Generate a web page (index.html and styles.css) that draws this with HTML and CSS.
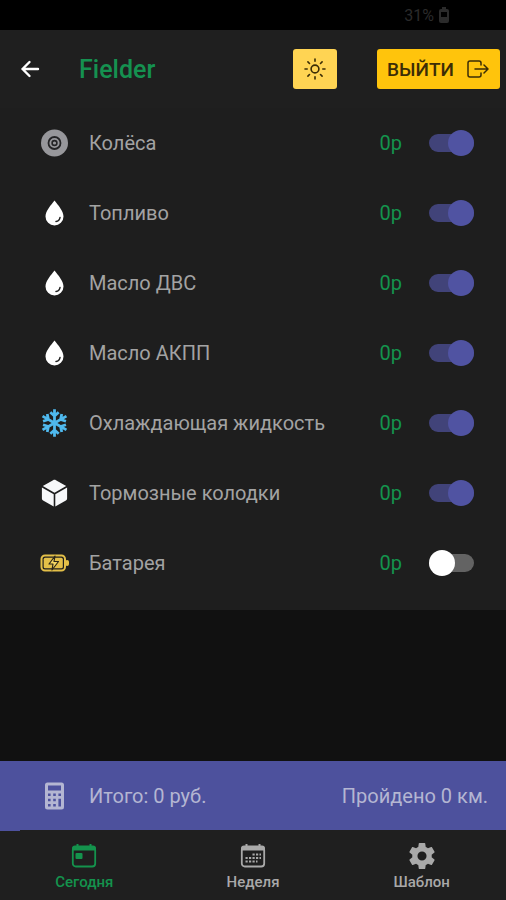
FILE: index.html
```html
<!DOCTYPE html>
<html lang="ru">
<head>
  <meta charset="UTF-8">
  <meta name="viewport" content="width=device-width, initial-scale=1">
  <title>Fielder</title>
  <link rel="stylesheet" href="styles.css">
</head>
<body>
  <div class="status-bar">
    <span>31%</span>
    <svg width="12" height="16" viewBox="0 0 12 16">
      <path d="M3 2h1V0h4v2h1a2 2 0 0 1 2 2v10a2 2 0 0 1-2 2H3a2 2 0 0 1-2-2V4a2 2 0 0 1 2-2zm0 3v5h6V5z" fill="currentColor" fill-rule="evenodd"/>
    </svg>
  </div>

  <header class="header">
    <button type="button" class="back-btn" aria-label="Назад">
      <svg width="20" height="20" viewBox="0 0 20 20" fill="none" stroke="currentColor" stroke-width="2.400" stroke-linecap="round" stroke-linejoin="round">
        <path d="M9.500 3L2.500 10l7 7M2.500 10H18"/>
      </svg>
    </button>
    <h1 class="title">Fielder</h1>
    <button type="button" class="btn theme-btn" aria-label="Тема">
      <svg width="22" height="22" viewBox="0 0 22 22" fill="none" stroke="currentColor" stroke-width="1.600" stroke-linecap="round">
        <circle cx="11" cy="11" r="3.900"/>
        <path d="M11 1v2.200M11 18.800V21M1 11h2.200M18.800 11H21M3.900 3.900l1.600 1.600M16.500 16.500l1.600 1.600M3.900 18.100l1.600-1.600M16.500 5.500l1.600-1.600"/>
      </svg>
    </button>
    <button type="button" class="btn exit-btn">
      <span>ВЫЙТИ</span>
      <svg width="22" height="18" viewBox="0 0 22 18" fill="none" stroke="currentColor" stroke-width="1.500" stroke-linecap="round" stroke-linejoin="round">
        <path d="M14 5V3a2 2 0 0 0-2-2H3a2 2 0 0 0-2 2v12a2 2 0 0 0 2 2h9a2 2 0 0 0 2-2v-2M17 5l4 4-4 4M8 9h12.500"/>
      </svg>
    </button>
  </header>

  <main class="content">
    <ul class="list">
      <li class="item">
        <svg class="item-icon" viewBox="0 0 28 28">
          <circle cx="14" cy="14" r="13.500" fill="#97979b"/>
          <circle cx="14" cy="14" r="6" fill="none" stroke="#242426" stroke-width="1.800"/>
          <circle cx="14" cy="14" r="2.400" fill="none" stroke="#242426" stroke-width="1.600"/>
        </svg>
        <label class="item-name" for="wheels">Колёса</label>
        <span class="price">0р</span>
        <input type="checkbox" class="toggle" id="wheels" checked>
      </li>
      <li class="item">
        <svg class="item-icon" viewBox="0 0 28 28">
          <path d="M14 1.500c3.500 4.500 9 10.500 9 16a9 9 0 0 1-18 0c0-5.500 5.500-11.500 9-16z" fill="#fff"/>
          <path d="M19.500 18.500c-.3 2.200-1.800 3.700-4 4" fill="none" stroke="#222" stroke-width="1.500" stroke-linecap="round"/>
        </svg>
        <label class="item-name" for="fuel">Топливо</label>
        <span class="price">0р</span>
        <input type="checkbox" class="toggle" id="fuel" checked>
      </li>
      <li class="item">
        <svg class="item-icon" viewBox="0 0 28 28">
          <path d="M14 1.500c3.500 4.500 9 10.500 9 16a9 9 0 0 1-18 0c0-5.500 5.500-11.500 9-16z" fill="#fff"/>
          <path d="M19.500 18.500c-.3 2.200-1.800 3.700-4 4" fill="none" stroke="#222" stroke-width="1.500" stroke-linecap="round"/>
        </svg>
        <label class="item-name" for="engineOil">Масло ДВС</label>
        <span class="price">0р</span>
        <input type="checkbox" class="toggle" id="engineOil" checked>
      </li>
      <li class="item">
        <svg class="item-icon" viewBox="0 0 28 28">
          <path d="M14 1.500c3.500 4.500 9 10.500 9 16a9 9 0 0 1-18 0c0-5.500 5.500-11.500 9-16z" fill="#fff"/>
          <path d="M19.500 18.500c-.3 2.200-1.800 3.700-4 4" fill="none" stroke="#222" stroke-width="1.500" stroke-linecap="round"/>
        </svg>
        <label class="item-name" for="gearOil">Масло АКПП</label>
        <span class="price">0р</span>
        <input type="checkbox" class="toggle" id="gearOil" checked>
      </li>
      <li class="item">
        <svg class="item-icon" viewBox="0 0 28 28" fill="none" stroke="#4fb9ee" stroke-width="2.800" stroke-linejoin="round">
          <path id="ray" d="M14 14V.2M9.800 3.200L14 7l4.200-3.800"/>
          <use href="#ray" transform="rotate(60 14 14)"/>
          <use href="#ray" transform="rotate(120 14 14)"/>
          <use href="#ray" transform="rotate(180 14 14)"/>
          <use href="#ray" transform="rotate(240 14 14)"/>
          <use href="#ray" transform="rotate(300 14 14)"/>
        </svg>
        <label class="item-name" for="coolant">Охлаждающая жидкость</label>
        <span class="price">0р</span>
        <input type="checkbox" class="toggle" id="coolant" checked>
      </li>
      <li class="item">
        <svg class="item-icon" viewBox="0 0 28 28" fill="#f7f8fa">
          <path d="M14 .8c.5 0 1 .1 1.400.4l10.300 5.900L14 13.700 2.300 7.100l10.300-5.900c.4-.3.900-.4 1.400-.4z"/>
          <path d="M1.400 8.600l11.800 6.700v12.300l-10.600-6c-.8-.4-1.200-1.100-1.200-2z"/>
          <path d="M26.600 8.600l-11.800 6.700v12.300l10.600-6c.8-.4 1.200-1.100 1.200-2z"/>
        </svg>
        <label class="item-name" for="pads">Тормозные колодки</label>
        <span class="price">0р</span>
        <input type="checkbox" class="toggle" id="pads" checked>
      </li>
      <li class="item">
        <svg class="item-icon" viewBox="0 0 28 28">
          <rect x="1" y="6.500" width="23.500" height="15" rx="3.500" fill="none" stroke="#e3bf48" stroke-width="2"/>
          <path d="M26 11.500v5h1a1 1 0 0 0 1-1v-3a1 1 0 0 0-1-1z" fill="#e3bf48" stroke="#e3bf48"/>
          <rect x="3.200" y="8.700" width="19.100" height="10.600" rx="1.500" fill="#e3bf48"/>
          <path d="M14.500 7l-6 8h4l-1 6 6.500-8.500h-4.500z" fill="#f4d662" stroke="#2a2618" stroke-width="1.200" stroke-linejoin="round"/>
        </svg>
        <label class="item-name" for="battery">Батарея</label>
        <span class="price">0р</span>
        <input type="checkbox" class="toggle" id="battery">
      </li>
    </ul>
  </main>

  <section class="summary">
    <svg class="item-icon" viewBox="0 0 28 28">
      <path d="M7 .5h14a2.500 2.500 0 0 1 2.500 2.500v22a2.500 2.500 0 0 1-2.500 2.500H7A2.500 2.500 0 0 1 4.500 25V3A2.500 2.500 0 0 1 7 .5zM7.500 3.500v5h13v-5z" fill="#b4b6d2" fill-rule="evenodd"/>
      <path d="M7.500 11.500h2.600v2.600H7.500zM12.700 11.500h2.600v2.600h-2.600zM17.900 11.500h2.600v2.600h-2.600zM7.500 16.700h2.600v2.600H7.500zM12.700 16.700h2.600v2.600h-2.600zM7.500 21.900h2.600v2.600H7.500zM12.700 21.900h2.600v2.600h-2.600zM17.900 16.700h2.600v7.800h-2.600z" fill="#4d519d"/>
    </svg>
    <span>Итого: 0 руб.</span>
    <span class="distance">Пройдено 0 км.</span>
  </section>

  <nav class="tabs">
    <a href="#today" class="tab active">
      <svg width="26" height="26" viewBox="0 0 26 26">
        <path d="M4 2.500h1.500V1h2v1.500h11V1h2v1.500H22A3 3 0 0 1 25 5.500v2H1v-2a3 3 0 0 1 3-3z" fill="currentColor"/>
        <rect x="1.800" y="4" width="22.400" height="19.500" rx="3" fill="none" stroke="currentColor" stroke-width="1.800"/>
        <rect x="4.500" y="10" width="7" height="6" rx="1" fill="currentColor"/>
      </svg>
      <span>Сегодня</span>
    </a>
    <a href="#week" class="tab">
      <svg width="26" height="26" viewBox="0 0 26 26">
        <path d="M4 2.500h1.500V1h2v1.500h11V1h2v1.500H22A3 3 0 0 1 25 5.500v2H1v-2a3 3 0 0 1 3-3z" fill="currentColor"/>
        <rect x="1.800" y="4" width="22.400" height="19.500" rx="3" fill="none" stroke="currentColor" stroke-width="1.800"/>
        <path d="M12.500 11.500H21M5.500 15H21M5.500 18.500h12" fill="none" stroke="currentColor" stroke-width="2.200" stroke-dasharray="2.200 1.300"/>
      </svg>
      <span>Неделя</span>
    </a>
    <a href="#template" class="tab">
      <svg width="26" height="26" viewBox="2 2 20 20">
        <path d="M19.430 12.980c.04-.32.070-.64.070-.98s-.03-.66-.07-.98l2.110-1.650c.19-.15.240-.42.120-.64l-2-3.460c-.12-.22-.39-.3-.61-.22l-2.490 1c-.52-.4-1.080-.73-1.690-.98l-.38-2.650C14.460 2.180 14.250 2 14 2h-4c-.25 0-.46.180-.49.420l-.38 2.650c-.61.250-1.170.590-1.690.980l-2.490-1c-.23-.09-.49 0-.61.220l-2 3.460c-.13.220-.07.490.120.640l2.110 1.650c-.04.320-.07.650-.07.980s.03.660.07.980l-2.110 1.650c-.19.150-.24.420-.12.640l2 3.460c.12.220.39.300.61.220l2.490-1c.52.400 1.080.730 1.690.980l.38 2.650c.03.240.24.420.49.420h4c.25 0 .46-.18.490-.42l.38-2.650c.61-.25 1.170-.59 1.690-.98l2.490 1c.23.090.49 0 .61-.22l2-3.460c.12-.22.070-.49-.12-.64zM12 15.500a3.500 3.500 0 1 1 0-7 3.500 3.500 0 0 1 0 7z" fill="currentColor"/>
      </svg>
      <span>Шаблон</span>
    </a>
  </nav>
</body>
</html>
```
FILE: styles.css
```css
* {
  box-sizing: border-box;
}

body {
  display: flex;
  flex-direction: column;
  min-height: 100vh;
  margin: 0;
  background-color: #111;
  color: #a3a3a3;
  font-family: Roboto, sans-serif;
  font-size: 20px;
}

button {
  border: none;
  padding: 0;
  font-family: inherit;
}

.status-bar {
  display: flex;
  align-items: center;
  justify-content: flex-end;
  gap: 4px;
  height: 30px;
  padding-right: 56px;
  background-color: #000;
  color: #2b2b2b;
  font-size: 16px;
}

.header {
  display: flex;
  align-items: center;
  height: 78px;
  padding: 0 6px 0 20px;
  background-color: #1f1f1f;
}

.back-btn {
  display: flex;
  background: none;
  color: #fff;
}

.title {
  flex: 1;
  margin: 0 0 0 39px;
  color: #159150;
  font-size: 25px;
  font-weight: 500;
}

.btn {
  display: flex;
  align-items: center;
  justify-content: center;
  height: 40px;
  border-radius: 3px;
  color: #3b2d06;
}

.theme-btn {
  width: 44px;
  margin-right: 40px;
  background-color: #ffd453;
}

.exit-btn {
  gap: 13px;
  padding: 0 11px 0 10px;
  background-color: #ffc40c;
  font-size: 19px;
  font-weight: 500;
}

.content {
  flex: 1;
}

.list {
  margin: 0;
  padding: 0 32px 12px 40px;
  background-color: #1e1e1e;
  list-style: none;
}

.item {
  display: flex;
  align-items: center;
  height: 70px;
}

.item-icon {
  width: 29px;
  height: 28px;
  margin-right: 20px;
}

.item-name {
  flex: 1;
}

.price {
  margin-right: 27px;
  color: #14934d;
}

/* switch */
.toggle {
  display: flex;
  align-items: center;
  appearance: none;
  width: 45px;
  height: 18px;
  margin: 0;
  border-radius: 9px;
  background-color: #636363;
}

.toggle::before {
  content: "";
  width: 26px;
  height: 26px;
  flex-shrink: 0;
  border-radius: 50%;
  background-color: #fff;
}

.toggle:checked {
  justify-content: flex-end;
  background-color: #414379;
}

.toggle:checked::before {
  background-color: #5053a2;
}

.summary {
  display: flex;
  align-items: center;
  height: 69px;
  padding: 0 18px 0 40px;
  background-color: #4d519d;
  color: #b4b6d2;
}

.distance {
  margin-left: auto;
}

.tabs {
  display: flex;
  height: 70px;
  background-color: #1f1f1f;
}

/* short line under the summary */
.tabs::before {
  content: "";
  width: 20px;
  height: 1px;
  margin-right: -20px;
  background-color: #4d519d;
}

.tab {
  display: flex;
  flex: 1;
  flex-direction: column;
  align-items: center;
  justify-content: center;
  gap: 4px;
  padding-top: 3px;
  color: #a9a9a9;
  font-size: 15px;
  font-weight: 500;
  line-height: 18px;
  text-decoration: none;
}

.tab.active {
  color: #14934d;
}
```
